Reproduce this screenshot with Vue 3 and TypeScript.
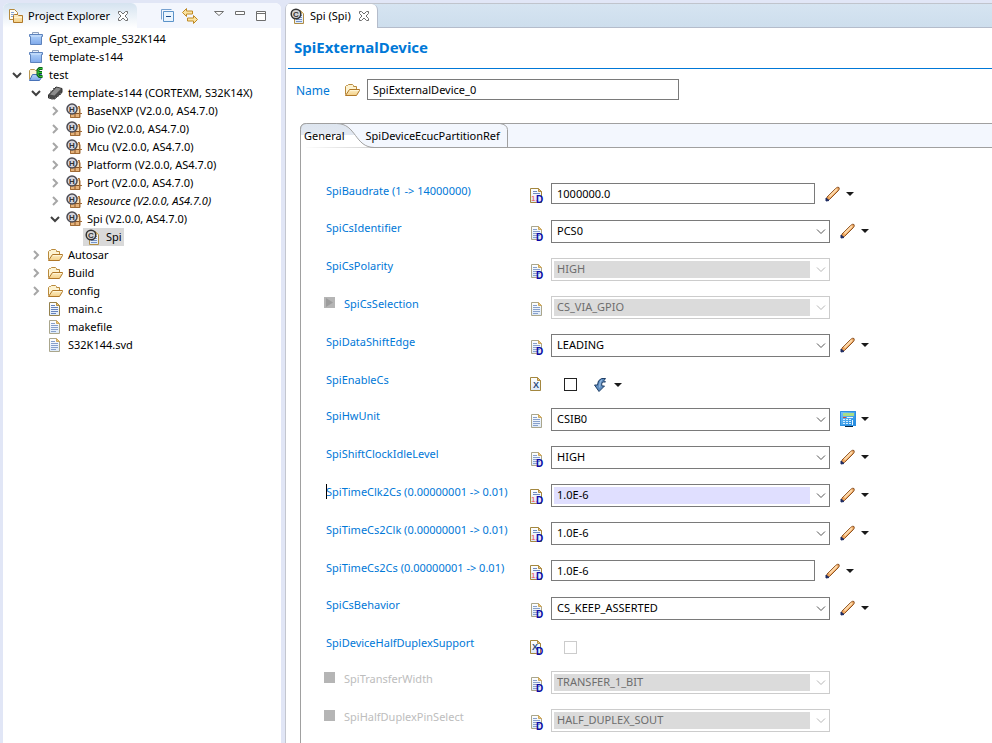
<script setup lang="ts">
import { ref } from 'vue'

interface TreeNode {
  label: string
  depth: number
  icon: string
  state?: 'open' | 'closed'
  italic?: boolean
  selected?: boolean
}

interface Field {
  id: string
  label: string
  kind: 'text' | 'combo' | 'check'
  icon: string
  value?: string
  disabled?: boolean
  action?: string
  marker?: 'arrow' | 'square'
  dim?: boolean
  active?: boolean
}

interface Letter {
  char: string
  x: number
  y: number
  tone: string
}

// Letters drawn over the icon shapes, by icon name.
const letters: Record<string, Letter[]> = {
  module: [{ char: 'H', x: 3, y: 9, tone: 'dark' }],
  config: [{ char: 'C', x: 3, y: 9, tone: 'dark' }],
  'page-d': [{ char: 'D', x: 7, y: 16, tone: 'badge' }],
  'number-d': [
    { char: '1.', x: 2, y: 13, tone: 'red' },
    { char: 'D', x: 7, y: 15, tone: 'badge' },
  ],
  bool: [{ char: 'X', x: 4, y: 11, tone: 'steel' }],
  'bool-d': [
    { char: 'X', x: 3, y: 10, tone: 'steel' },
    { char: 'D', x: 7, y: 15, tone: 'badge' },
  ],
}

const nodes = ref<TreeNode[]>([
  { label: 'Gpt_example_S32K144', depth: 0, icon: 'closed-project' },
  { label: 'template-s144', depth: 0, icon: 'closed-project' },
  { label: 'test', depth: 0, icon: 'open-project', state: 'open' },
  { label: 'template-s144 (CORTEXM, S32K14X)', depth: 1, icon: 'chip', state: 'open' },
  { label: 'BaseNXP (V2.0.0, AS4.7.0)', depth: 2, icon: 'module', state: 'closed' },
  { label: 'Dio (V2.0.0, AS4.7.0)', depth: 2, icon: 'module', state: 'closed' },
  { label: 'Mcu (V2.0.0, AS4.7.0)', depth: 2, icon: 'module', state: 'closed' },
  { label: 'Platform (V2.0.0, AS4.7.0)', depth: 2, icon: 'module', state: 'closed' },
  { label: 'Port (V2.0.0, AS4.7.0)', depth: 2, icon: 'module', state: 'closed' },
  { label: 'Resource (V2.0.0, AS4.7.0)', depth: 2, icon: 'module', state: 'closed', italic: true },
  { label: 'Spi (V2.0.0, AS4.7.0)', depth: 2, icon: 'module', state: 'open' },
  { label: 'Spi', depth: 3, icon: 'config', selected: true },
  { label: 'Autosar', depth: 1, icon: 'folder', state: 'closed' },
  { label: 'Build', depth: 1, icon: 'folder', state: 'closed' },
  { label: 'config', depth: 1, icon: 'folder', state: 'closed' },
  { label: 'main.c', depth: 1, icon: 'file' },
  { label: 'makefile', depth: 1, icon: 'page' },
  { label: 'S32K144.svd', depth: 1, icon: 'page' },
])

const name = ref('SpiExternalDevice_0')

const fields = ref<Field[]>([
  { id: 'baudrate', label: 'SpiBaudrate (1 -> 14000000)', kind: 'text', icon: 'number-d', value: '1000000.0', action: 'pencil' },
  { id: 'cs-identifier', label: 'SpiCsIdentifier', kind: 'combo', icon: 'page-d', value: 'PCS0', action: 'pencil' },
  { id: 'cs-polarity', label: 'SpiCsPolarity', kind: 'combo', icon: 'page-d', value: 'HIGH', disabled: true },
  { id: 'cs-selection', label: 'SpiCsSelection', kind: 'combo', icon: 'page', value: 'CS_VIA_GPIO', disabled: true, marker: 'arrow' },
  { id: 'data-shift-edge', label: 'SpiDataShiftEdge', kind: 'combo', icon: 'page-d', value: 'LEADING', action: 'pencil' },
  { id: 'enable-cs', label: 'SpiEnableCs', kind: 'check', icon: 'bool', action: 'inherit' },
  { id: 'hw-unit', label: 'SpiHwUnit', kind: 'combo', icon: 'page', value: 'CSIB0', action: 'calculator' },
  { id: 'shift-clock', label: 'SpiShiftClockIdleLevel', kind: 'combo', icon: 'page-d', value: 'HIGH', action: 'pencil' },
  { id: 'clk2cs', label: 'SpiTimeClk2Cs (0.00000001 -> 0.01)', kind: 'combo', icon: 'number-d', value: '1.0E-6', action: 'pencil', active: true },
  { id: 'cs2clk', label: 'SpiTimeCs2Clk (0.00000001 -> 0.01)', kind: 'combo', icon: 'number-d', value: '1.0E-6', action: 'pencil' },
  { id: 'cs2cs', label: 'SpiTimeCs2Cs (0.00000001 -> 0.01)', kind: 'text', icon: 'number-d', value: '1.0E-6', action: 'pencil' },
  { id: 'cs-behavior', label: 'SpiCsBehavior', kind: 'combo', icon: 'page-d', value: 'CS_KEEP_ASSERTED', action: 'pencil' },
  { id: 'half-duplex', label: 'SpiDeviceHalfDuplexSupport', kind: 'check', icon: 'bool-d', disabled: true },
  { id: 'transfer-width', label: 'SpiTransferWidth', kind: 'combo', icon: 'page-d', value: 'TRANSFER_1_BIT', disabled: true, marker: 'square', dim: true },
  { id: 'pin-select', label: 'SpiHalfDuplexPinSelect', kind: 'combo', icon: 'page-d', value: 'HALF_DUPLEX_SOUT', disabled: true, marker: 'square', dim: true },
])
</script>

<template>
  <svg class="sprite" width="0" height="0" aria-hidden="true">
    <defs>
      <linearGradient id="g-blue" x1="0" y1="0" x2="0" y2="1">
        <stop offset="0" stop-color="#b4d4fa" /><stop offset="1" stop-color="#7fa9ea" />
      </linearGradient>
      <linearGradient id="g-page" x1="0" y1="0" x2="0" y2="1">
        <stop offset="0" stop-color="#ffffff" /><stop offset="1" stop-color="#dce9f8" />
      </linearGradient>
      <linearGradient id="g-fold" x1="0" y1="0" x2="0" y2="1">
        <stop offset="0" stop-color="#fdf0c8" /><stop offset="1" stop-color="#f3cf86" />
      </linearGradient>
      <linearGradient id="g-tab" x1="0" y1="0" x2="0" y2="1">
        <stop offset="0" stop-color="#dde5ef" /><stop offset="0.45" stop-color="#e2e8f1" /><stop offset="0.46" stop-color="#ffffff" />
      </linearGradient>
      <linearGradient id="g-calc" x1="0" y1="0" x2="1" y2="1">
        <stop offset="0" stop-color="#7cc6fb" /><stop offset="1" stop-color="#1583dc" />
      </linearGradient>
    </defs>

    <symbol id="closed-project" viewBox="0 0 16 16">
      <path d="M4.500 3.500v-2h6v2" fill="#e8f1fc" stroke="#8da0bd" />
      <path d="M1.500 3.500h13v2h-1v8h-11v-8h-1z" fill="url(#g-blue)" stroke="#5d83bd" />
      <path d="M3 5h10" stroke="#cfe3fb" />
    </symbol>
    <symbol id="open-project" viewBox="0 0 16 16">
      <path d="M1.500 12.500v-9l1-1h4l1 1h3v4" fill="#fdf4d6" stroke="#b99752" />
      <path d="M1.500 13.500l3-6h9v3l-2 3z" fill="url(#g-blue)" stroke="#4872b8" />
      <path d="M14.500 1.500h-3l-1.500 1.500v5l1.500 1.500h3M10 5.500h4" fill="none" stroke="#0e5f1d" stroke-width="3" />
      <path d="M14.500 1.500h-3l-1.500 1.500v5l1.500 1.500h3M10 5.500h4" fill="none" stroke="#35c935" />
    </symbol>
    <symbol id="chip" viewBox="0 0 16 16">
      <path d="M1.500 10l7.500-8 6 1.500v4l-7.500 6.500-6-1z" fill="#4a4a4a" stroke="#303030" />
      <path d="M3 9.500l6.500-7 4.500 1.300-6.500 6.700z" fill="#8c8c8c" />
      <path d="M2.500 12v2M5 13v2M8.500 12v2M11 10v2M13.500 8v2M4 5.500v2M6.500 3v2" stroke="#6a6a6a" />
    </symbol>
    <symbol id="module" viewBox="0 0 16 16">
      <path d="M4 4h10v11h-10z" fill="#e5b27a" />
      <path d="M9 9v6M4 10.500h11" stroke="#8a5526" />
      <path d="M10 6h3v4h-3z" fill="#f9dfb8" />
      <path d="M4.500 10v4.500h9.500v-9M12 3.500h1.500v11.500M14 10.500h2" fill="none" stroke="#a06a35" />
      <circle cx="6" cy="6" r="5" fill="#d4d4dc" stroke="#4c4c54" stroke-width="1.500" />
    </symbol>
    <symbol id="config" viewBox="0 0 16 16">
      <path d="M4.500 2.500h6l3 3v10h-9z" fill="url(#g-page)" stroke="#b08d45" />
      <path d="M10.500 2.500v3h3z" fill="#ecc878" />
      <path d="M6 11.500h6M6 13.500h6M10 7.500h2M10 9.500h2" stroke="#7693c8" />
      <circle cx="6" cy="6" r="4.800" fill="#d4d4d4" stroke="#333" stroke-width="1.500" />
    </symbol>
    <symbol id="folder" viewBox="0 0 16 16">
      <path d="M1.500 12.500v-8l1-1h1l1-1h4l1 1v1h3v3" fill="#fdf3d2" stroke="#b98a3c" />
      <path d="M1.500 13.500l4-6h10v1l-3 5z" fill="url(#g-fold)" stroke="#b07828" />
      <path d="M6 8.500h9" stroke="#fff5d5" />
    </symbol>
    <symbol id="page" viewBox="0 0 16 16">
      <path d="M2.500 1.500h7l3 3v10h-10z" fill="url(#g-page)" stroke="#aaa68c" />
      <path d="M9.500 1.500v3h3z" fill="#ecc878" stroke="#cda85e" />
      <path d="M4 4.500h4M4 6.500h7M4 8.500h7M4 10.500h7M4 12.500h5" stroke="#87a0cb" />
    </symbol>
    <symbol id="file" viewBox="0 0 16 16">
      <path d="M2.500 1.500h7l3 3v10h-10z" fill="url(#g-page)" stroke="#94814d" />
      <path d="M9.500 1.500v3h3z" fill="#ecc878" stroke="#b08d45" />
      <path d="M4 4.500h4M4 6.500h7M4 8.500h7M4 10.500h7M4 12.500h5" stroke="#6583bd" />
    </symbol>
    <symbol id="page-d" viewBox="0 0 16 16">
      <use href="#page" />
    </symbol>
    <symbol id="number-d" viewBox="0 0 16 16">
      <path d="M1.500 .5h8l3 3v11h-11z" fill="url(#g-page)" stroke="#a3873f" />
      <path d="M9.500 .5v3h3z" fill="#ecc878" stroke="#b08d45" />
      <path d="M4 3.500h4M4 5.500h7" stroke="#6f8ac0" />
    </symbol>
    <symbol id="bool" viewBox="0 0 16 16">
      <path d="M1.500 .5h7l3 3v10h-10z" fill="url(#g-page)" stroke="#a3873f" />
      <path d="M8.500 .5v3h3z" fill="#ecc878" stroke="#b08d45" />
    </symbol>
    <symbol id="bool-d" viewBox="0 0 16 16">
      <use href="#bool" />
    </symbol>
    <symbol id="pencil" viewBox="0 0 16 16">
      <path d="M1.500 14.500l.5-3.500 8.500-8.500q2.500-2 3.500-1q1 1.500-1 3.500l-8.500 8.500z" fill="#f0a860" stroke="#8d5426" />
      <path d="M4.500 10.500l7.500-7.500" stroke="#fdd9ab" stroke-width="2" />
      <path d="M1 15v-3l3 2.500z" fill="#1c2b63" stroke="#1c2b63" />
    </symbol>
    <symbol id="inherit" viewBox="0 0 16 16">
      <path d="M12.500 1.500h-4q-4 1.500-4 6.500h-3l4.500 6.500 5.500-5.500h-2.500q-1-2 .5-4h3l-1.500-1.500z" fill="#5f8dc0" stroke="#203f66" />
      <path d="M8.500 3q-2 2-1.800 7.500" fill="none" stroke="#a3c5e8" />
    </symbol>
    <symbol id="calculator" viewBox="0 0 16 16">
      <path d="M0 0h16v15h-3v1h-8v-1h-5z" fill="url(#g-calc)" />
      <path d="M5 15.500h8" stroke="#07223d" />
      <path d="M3 2h11v3h-11z" fill="#a9dd86" />
      <path d="M3 6.500h3" stroke="#d9482f" />
      <path d="M3 8.500h8M3 10.500h8M3 12.500h8" stroke="#d9effd" stroke-dasharray="2 1" />
      <path d="M7 6.500h6M12.500 9v5" stroke="#e9f5fd" />
      <path d="M.5 .5h15v14h-15z" fill="none" stroke="#2c8fe0" />
    </symbol>
    <symbol id="explorer" viewBox="0 0 16 16">
      <path d="M1.500 11.500v-10h5l3 3v7z" fill="#fffdf3" stroke="#b58a3c" />
      <path d="M3 4.500h3M3 6.500h4M3 8.500h3" stroke="#86a3d2" />
      <path d="M5.500 14.500v-7l1-1h3l1 1h4v7z" fill="url(#g-fold)" stroke="#b07828" />
      <path d="M6 9.500h8" stroke="#fff3d0" />
    </symbol>
    <symbol id="close" viewBox="0 0 12 12">
      <path d="M1.500 1.500h2l2.500 2.500 2.500-2.500h2v2l-2.500 2.500 2.500 2.500v2h-2l-2.500-2.500-2.500 2.500h-2v-2l2.500-2.500-2.500-2.500z" fill="#fff" stroke="#6e6e6e" />
    </symbol>
    <symbol id="collapse" viewBox="0 0 16 16">
      <path d="M1.500 11.500v-10h10" fill="none" stroke="#76a1d0" />
      <path d="M3.500 3.500h10v10h-10z" fill="#eaf4fd" stroke="#5b93c9" />
      <path d="M6 8.500h5" stroke="#1c4d8c" />
    </symbol>
    <symbol id="link" viewBox="0 0 16 16">
      <path d="M.5 4.500l4-4v2.500h6v3h-6v2.500z" fill="#fbe3a0" stroke="#bf8a26" />
      <path d="M15.500 11.500l-4-4v2.500h-6v3h6v2.500z" fill="#fbe3a0" stroke="#bf8a26" />
    </symbol>
    <symbol id="caret-open" viewBox="0 0 12 12">
      <path d="M2 4l4 4 4-4" fill="none" stroke="#404040" stroke-width="2" />
    </symbol>
    <symbol id="caret-closed" viewBox="0 0 12 12">
      <path d="M4 2l4 4-4 4" fill="none" stroke="#a6a6a6" stroke-width="2" />
    </symbol>
  </svg>

  <div class="workbench">
    <aside class="explorer">
      <header class="explorer-bar">
        <h2 class="explorer-tab">
          <svg class="icon"><use href="#explorer" /></svg>
          <span>Project Explorer</span>
          <button class="plain" aria-label="Close Project Explorer"><svg class="close"><use href="#close" /></svg></button>
        </h2>
        <div class="explorer-tools">
          <button class="plain" aria-label="Collapse all"><svg class="icon"><use href="#collapse" /></svg></button>
          <button class="plain" aria-label="Link with editor"><svg class="icon"><use href="#link" /></svg></button>
          <span class="window-tools">
            <button class="plain" aria-label="View menu">
              <svg width="12" height="12"><path d="M1.500 1.500h9l-4.500 4z" fill="#fff" stroke="#6e6e6e" /></svg>
            </button>
            <button class="plain" aria-label="Minimize">
              <svg width="12" height="12"><path d="M1.500 1.500h9v3h-9z" fill="#fff" stroke="#6e6e6e" /></svg>
            </button>
            <button class="plain" aria-label="Maximize">
              <svg width="12" height="12"><path d="M1.500 1.500h9v9h-9zM1 3.500h10" fill="#fff" stroke="#6e6e6e" /></svg>
            </button>
          </span>
        </div>
      </header>
      <ul class="tree">
        <li
          v-for="node in nodes"
          :key="node.depth + node.label"
          class="tree-row"
          :style="{ paddingLeft: node.depth * 19 + 'px' }"
        >
          <svg class="twisty"><use v-if="node.state" :href="'#caret-' + node.state" /></svg>
          <span class="tree-item" :class="{ selected: node.selected, italic: node.italic }">
            <svg class="icon" aria-hidden="true">
              <use :href="'#' + node.icon" />
              <text v-for="l in letters[node.icon]" :key="l.char" :x="l.x" :y="l.y" class="letter" :class="l.tone">{{ l.char }}</text>
            </svg>
            <span>{{ node.label }}</span>
          </span>
        </li>
      </ul>
    </aside>

    <main class="editor">
      <div class="editor-bar">
        <div class="editor-tab">
          <svg class="icon" aria-hidden="true">
            <use href="#config" />
            <text v-for="l in letters.config" :key="l.char" :x="l.x" :y="l.y" class="letter" :class="l.tone">{{ l.char }}</text>
          </svg>
          <span>Spi (Spi)</span>
          <button class="plain" aria-label="Close Spi"><svg class="close"><use href="#close" /></svg></button>
        </div>
      </div>
      <h1 class="title">SpiExternalDevice</h1>
      <div class="name-row">
        <label for="name">Name</label>
        <svg class="icon"><use href="#folder" /></svg>
        <input id="name" v-model="name" class="box name-box" type="text" />
      </div>

      <section class="folder">
        <div class="folder-bar" role="tablist">
          <svg class="tab-shape" width="208" height="25" aria-hidden="true">
            <path d="M.5 25v-18.500q0-6 6-6h30c20 0 18 24 38 24z" fill="url(#g-tab)" />
            <path d="M.5 25v-18.500q0-6 6-6h30c20 0 18 24 38 24M200 .5q7 1 7.500 6v18" fill="none" stroke="#a0a0a0" />
          </svg>
          <button class="tab" role="tab" aria-selected="true">General</button>
          <button class="tab" role="tab" aria-selected="false">SpiDeviceEcucPartitionRef</button>
        </div>
        <form class="form" @submit.prevent>
          <div v-for="field in fields" :key="field.id" class="row" :class="'row-' + field.kind">
            <div class="caption" :class="{ marked: field.marker, dim: field.dim, caret: field.active }">
              <span v-if="field.marker" class="marker">
                <svg v-if="field.marker === 'arrow'" width="11" height="11">
                  <path d="M2 1l7 4.500-7 4.500z" fill="#9c9c9c" />
                </svg>
              </span>
              <label :for="field.id">{{ field.label }}</label>
            </div>
            <svg class="icon type" aria-hidden="true">
              <use :href="'#' + field.icon" />
              <text v-for="l in letters[field.icon]" :key="l.char" :x="l.x" :y="l.y" class="letter" :class="l.tone">{{ l.char }}</text>
            </svg>
            <div class="control">
              <input v-if="field.kind === 'text'" :id="field.id" v-model="field.value" class="box" type="text" />
              <span v-else-if="field.kind === 'combo'" class="combo" :class="{ active: field.active, off: field.disabled }">
                <select :id="field.id" v-model="field.value" :disabled="field.disabled">
                  <option :value="field.value">{{ field.value }}</option>
                </select>
                <svg class="drop" width="10" height="6"><path d="M1 .5l4 4 4-4" /></svg>
              </span>
              <input v-else :id="field.id" class="tick" type="checkbox" :disabled="field.disabled" />
              <button v-if="field.action" class="plain action" type="button" :aria-label="'Edit ' + field.label">
                <svg class="icon"><use :href="'#' + field.action" /></svg>
                <svg width="8" height="4"><path d="M0 0h8l-4 4z" fill="#1a1a1a" /></svg>
              </button>
            </div>
          </div>
        </form>
      </section>
    </main>
  </div>
</template>

<style>
body {
  background: #e1e6f6;
}
</style>

<style scoped>
.sprite {
  position: absolute;
}
.letter {
  font: bold 8px 'Liberation Sans', sans-serif;
}
.dark {
  fill: #333;
}
.badge {
  font-size: 10px;
  fill: #0a0aa8;
}
.red {
  font-weight: normal;
  fill: #f04848;
}
.steel {
  font-size: 9px;
  fill: #2d4c7c;
}
.workbench {
  display: grid;
  grid-template-columns: 278px minmax(0, 1fr);
  gap: 4px;
  min-height: 100vh;
  padding: 3px 0 0 3px;
  box-sizing: border-box;
  color: #000;
  font: 11px/18px 'Noto Sans', 'Open Sans', sans-serif;
}
.icon {
  width: 16px;
  height: 16px;
  flex: none;
  overflow: visible;
}
.close {
  width: 12px;
  height: 12px;
}
.plain {
  display: inline-flex;
  padding: 0;
  border: 0;
  background: none;
}
.explorer {
  background: #fff;
  border-radius: 6px 6px 0 0;
}
.explorer-bar {
  display: flex;
  justify-content: space-between;
  height: 25px;
  background: #f3f6fd;
  border-radius: 6px 6px 0 0;
}
.explorer-tab {
  display: flex;
  align-items: center;
  gap: 4px;
  margin: 0;
  padding: 0 8px 0 5px;
  border-radius: 6px 6px 0 0;
  background: linear-gradient(#d5e3f0, #fff);
  font-size: 11px;
  font-weight: normal;
}
.explorer-tab .plain,
.editor-tab .plain {
  margin-left: 3px;
}
.explorer-tools {
  display: flex;
  align-items: center;
  gap: 6px;
  padding-right: 14px;
}
.window-tools {
  display: flex;
  gap: 9px;
  padding-left: 9px;
}
.tree {
  margin: 0;
  padding: 2px 0 0 8px;
  list-style: none;
}
.tree-row {
  display: flex;
  align-items: center;
  height: 18px;
}
.twisty {
  width: 12px;
  height: 12px;
  margin-right: 3px;
  flex: none;
}
.tree-item {
  display: flex;
  align-items: center;
  gap: 5px;
  padding: 0 2px;
  white-space: nowrap;
}
.selected {
  background: #d9d9d9;
}
.italic {
  font-style: italic;
}
.editor {
  background: #fff;
  border-left: 1px solid #c3c6cf;
  border-radius: 6px 0 0 0;
  overflow: hidden;
}
.editor-bar {
  height: 25px;
  box-sizing: border-box;
  border-top: 1px solid #c0c4cc;
  border-bottom: 1px solid #b4bccb;
  background: linear-gradient(#d6e4f1, #cddeed);
}
.editor-tab {
  display: inline-flex;
  align-items: center;
  gap: 4px;
  height: 24px;
  padding: 0 7px 0 4px;
  border-right: 1px solid #b4bccb;
  border-radius: 0 6px 0 0;
  background: #fff;
}
.title {
  margin: 0 0 0 2px;
  padding: 8px 0 10px 6px;
  border-bottom: 1px solid #0078d7;
  color: #0078d7;
  font-size: 15px;
  line-height: 22px;
}
.name-row {
  display: flex;
  align-items: center;
  padding: 10px 0 0 10px;
}
.name-row label {
  width: 48px;
  padding-top: 2px;
  color: #0078d7;
  font-size: 12px;
}
.name-row .icon {
  margin-right: 7px;
}
.box {
  width: 264px;
  height: 21px;
  padding: 0 5px;
  box-sizing: border-box;
  border: 1px solid #7a7a7a;
  background: #fff;
  color: inherit;
  font: inherit;
}
.name-box {
  width: 312px;
}
.folder {
  margin: 23px 0 0 14px;
  border-left: 1px solid #a0a0a0;
  border-radius: 6px 0 0 0;
}
.folder-bar {
  position: relative;
  display: flex;
  gap: 21px;
  height: 25px;
  padding-left: 3px;
  box-sizing: border-box;
  border: solid #a0a0a0;
  border-width: 1px 0;
  border-radius: 6px 0 0 0;
  background: #f3f7fe;
}
.tab-shape {
  position: absolute;
  top: -1px;
  left: -1px;
}
.tab {
  position: relative;
  padding: 0;
  border: 0;
  background: none;
  color: inherit;
  font: inherit;
}
.form {
  display: flex;
  flex-direction: column;
  gap: 15px;
  padding: 35px 0 11px 25px;
}
.row {
  display: grid;
  grid-template-columns: 203px 22px minmax(0, 1fr);
  align-items: start;
  height: 23px;
}
.row-text {
  height: 22px;
}
.row-check {
  height: 21px;
}
.caption {
  display: flex;
  gap: 9px;
  color: #0078d7;
  line-height: 16px;
  white-space: nowrap;
}
.caption.marked {
  margin-left: -2px;
}
.caption.dim {
  color: #bdbdbd;
}
.caption.caret {
  position: relative;
}
.caption.caret::before {
  content: '';
  position: absolute;
  left: 0;
  top: 0;
  width: 1px;
  height: 15px;
  background: #000;
}
.marker {
  width: 11px;
  height: 11px;
  margin-top: 1px;
  background: #b5b5b5;
  line-height: 0;
}
.type {
  margin-top: 5px;
}
.control {
  display: flex;
  align-items: flex-start;
  gap: 10px;
}
.combo {
  position: relative;
  width: 279px;
}
.combo select {
  display: block;
  width: 100%;
  height: 23px;
  padding: 0 20px 2px 5px;
  box-sizing: border-box;
  appearance: none;
  border: 1px solid #7a7a7a;
  border-radius: 0;
  background: #fff;
  color: #000;
  font: inherit;
  opacity: 1;
}
.combo.off select {
  border-color: #ccc;
  background: linear-gradient(#dbdbdb, #dbdbdb) 2px 2px / calc(100% - 21px) 17px no-repeat #fff;
  color: #6d6d6d;
}
.combo.active select {
  background: linear-gradient(#e0dfff, #e0dfff) 2px 2px / calc(100% - 21px) 17px no-repeat #fff;
}
.drop {
  position: absolute;
  right: 4px;
  top: 9px;
  fill: none;
  stroke: #555;
  pointer-events: none;
}
.off .drop {
  stroke: #b5b5b5;
}
.tick {
  width: 13px;
  height: 13px;
  margin: 6px 6px 0 13px;
  appearance: none;
  border: 1px solid #222;
  background: #fff;
}
.tick:disabled {
  border-color: #ccc;
}
.action {
  align-items: center;
  gap: 5px;
  padding-top: 3px;
}
.row-check .action {
  padding-top: 5px;
}
</style>
